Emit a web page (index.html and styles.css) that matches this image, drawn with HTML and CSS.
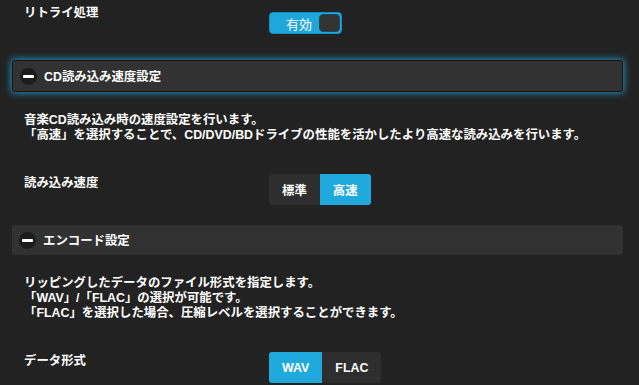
FILE: index.html
```html
<!DOCTYPE html>
<html lang="ja">

<head>
    <meta charset="UTF-8">
    <meta name="viewport" content="width=device-width, initial-scale=1.0">
    <title>リッピング設定</title>
    <link rel="stylesheet" href="styles.css">
</head>

<body>
    <main class="settings">
        <div class="setting-row first">
            <div class="setting-label">リトライ処理</div>
            <div class="toggle on">
                <span class="toggle-text">有効</span>
                <span class="toggle-knob"></span>
            </div>
        </div>

        <div class="section-header active">
            <span class="section-icon"><span class="minus"></span></span>
            <span class="section-title">CD読み込み速度設定</span>
        </div>
        <p class="description">
            音楽CD読み込み時の速度設定を行います。<br>
            「高速」を選択することで、CD/DVD/BDドライブの性能を活かしたより高速な読み込みを行います。
        </p>
        <div class="setting-row">
            <div class="setting-label">読み込み速度</div>
            <div class="segmented">
                <span class="segment">標準</span>
                <span class="segment selected">高速</span>
            </div>
        </div>

        <div class="section-header">
            <span class="section-icon"><span class="minus"></span></span>
            <span class="section-title">エンコード設定</span>
        </div>
        <p class="description">
            リッピングしたデータのファイル形式を指定します。<br>
            「WAV」/「FLAC」の選択が可能です。<br>
            「FLAC」を選択した場合、圧縮レベルを選択することができます。
        </p>
        <div class="setting-row">
            <div class="setting-label">データ形式</div>
            <div class="segmented">
                <span class="segment selected">WAV</span>
                <span class="segment">FLAC</span>
            </div>
        </div>
    </main>
</body>

</html>
```

FILE: styles.css
```css
body {
    margin: 0;
    padding: 0;
    background-color: #222;
    color: #fff;
    font-family: "Liberation Sans", "Noto Sans CJK JP", sans-serif;
    font-weight: bold;
}

.settings {
    padding: 0 16px 0 12px;
}

.setting-row {
    display: flex;
    align-items: flex-start;
    padding-left: 12px;
    margin-top: 31px;
}

.setting-row.first {
    margin-top: 0;
    padding-top: 5px;
}

.setting-label {
    width: 245px;
    font-size: 12.4px;
    line-height: 16px;
    margin-top: 1px;
}

.setting-row.first .setting-label {
    margin-top: 0;
}

/* トグルスイッチ */
.toggle {
    display: flex;
    align-items: center;
    box-sizing: border-box;
    width: 73px;
    height: 22px;
    margin-top: 7px;
    padding: 1px;
    border-radius: 4px;
    background-color: #1fa6da;
    border: 1px solid #1590c0;
}

.toggle-text {
    flex: 1;
    text-align: center;
    font-size: 13px;
    font-weight: normal;
    padding-left: 8px;
}

.toggle-knob {
    width: 21px;
    height: 18px;
    box-sizing: border-box;
    border-radius: 4px;
    background-color: #333;
    border: 1px solid #1a4a60;
}

/* セクション見出し */
.section-header {
    display: flex;
    align-items: center;
    height: 30px;
    margin-top: 20px;
    padding-left: 7px;
    background-color: #323232;
    border-radius: 3px;
}

.section-header.active {
    margin-top: 26px;
    border: 1px solid #161616;
    box-shadow: 0 0 7px 1px rgba(32, 160, 210, 0.9);
}

.section-icon {
    display: flex;
    align-items: center;
    justify-content: center;
    width: 17px;
    height: 17px;
    border-radius: 50%;
    background-color: #1c1c1c;
    margin-right: 7px;
}

.minus {
    width: 11px;
    height: 3px;
    background-color: #fff;
    border-radius: 1px;
}

.section-title {
    font-size: 12.4px;
}

.description {
    margin: 21px 0 0 12px;
    font-size: 12.4px;
    line-height: 15px;
}

/* セグメントボタン */
.segmented {
    display: flex;
    height: 31px;
    border-radius: 3px;
    overflow: hidden;
    background-color: #2e2e2e;
}

.segment {
    display: flex;
    align-items: center;
    padding: 0 13px;
    font-size: 12.4px;
}

.segment.selected {
    background-color: #1fa9dd;
}
```
